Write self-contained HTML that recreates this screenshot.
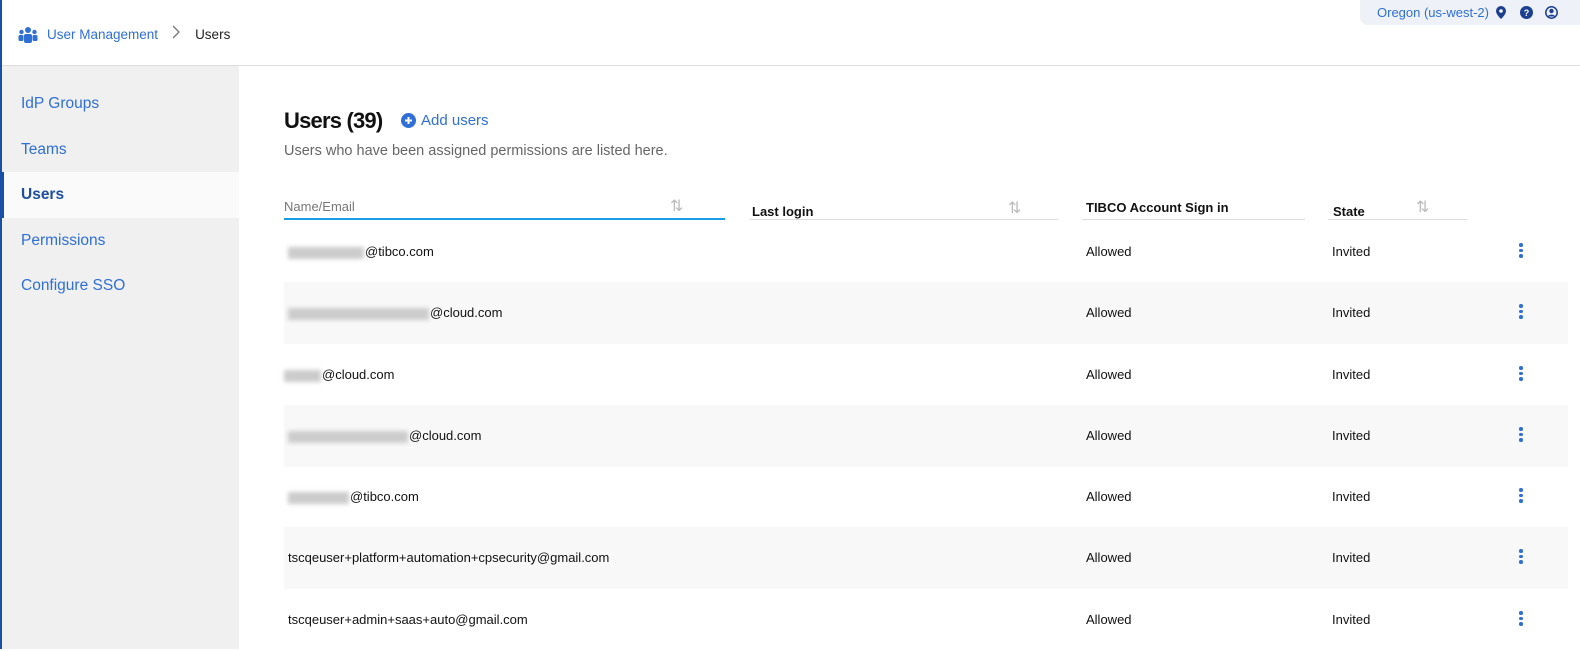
<!DOCTYPE html>
<html><head><style>
*{box-sizing:border-box;margin:0;padding:0}
body{width:1580px;height:649px;overflow:hidden;background:#fff;font-family:"Liberation Sans",sans-serif;position:relative}
.lb{position:absolute;left:0;top:0;width:2px;height:649px;background:#1a4fa8;z-index:5}
.hdr{position:absolute;left:0;top:0;width:1580px;height:66px;border-bottom:1px solid #ddd;background:#fff}
.bc{position:absolute;left:18px;top:25px;font-size:13.5px;display:flex;align-items:center}
.bc .a{color:#2f6fd6;margin-left:9px}
.bc .s{color:#777;margin:0 14px;font-size:16px}
.reg{position:absolute;left:1360px;top:0;width:220px;height:25px;background:#eef2f8;border-radius:0 0 0 8px;font-size:13px;color:#2f6fd6;padding:5px 0 0 17px}
.side{position:absolute;left:0;top:66px;width:239px;height:583px;background:#f0f0f0}
.side div{height:45.5px;line-height:45.5px;padding-left:21px;font-size:15.5px;color:#2f6fd6}
.side .act{background:#fafafa;color:#1d4f9e;font-weight:bold;border-left:4px solid #1a4fa8;padding-left:17px}
h1{position:absolute;left:284px;top:108px;font-size:22px;color:#111;font-weight:bold;letter-spacing:-0.8px}
.add{position:absolute;left:401px;top:112px;font-size:15px;color:#2f6fd6;display:flex;align-items:center}
.sub{position:absolute;left:284px;top:143px;font-size:14.5px;color:#666}
.th{position:absolute;font-size:13px;color:#111;font-weight:bold}
.ln{position:absolute;height:1px;background:#ddd}
.row{position:absolute;left:284px;width:1284px;height:61.5px;font-size:13px;color:#111}
.row.g{background:#f8f8f8}
.row span{position:absolute;top:23px}
.blur{display:inline-block;height:12px;background:#ccc;filter:blur(2px);vertical-align:middle;margin-right:1px}
.dots{position:absolute;left:1235px;top:22px;width:4px}
.dots i{display:block;width:3.5px;height:3.5px;border-radius:50%;background:#2f6fd6;margin-bottom:2px}
.sort{position:absolute;color:#bbb;font-size:16px}
</style></head><body>
<div class="lb"></div>
<div class="hdr">
<div class="bc"><svg width="20" height="16" viewBox="0 0 20 16"><circle cx="10" cy="3" r="3" fill="#2f6fd6"/><circle cx="3.5" cy="5" r="2.2" fill="#2f6fd6"/><circle cx="16.5" cy="5" r="2.2" fill="#2f6fd6"/><rect x="6" y="7" width="8" height="9" rx="2" fill="#2f6fd6"/><rect x="0.5" y="8" width="5" height="6" rx="1.5" fill="#2f6fd6"/><rect x="14.5" y="8" width="5" height="6" rx="1.5" fill="#2f6fd6"/></svg><span class="a">User Management</span><span class="s"><svg width="9" height="14" viewBox="0 0 9 14"><path d="M1 1l6 6-6 6" fill="none" stroke="#777" stroke-width="1.3"/></svg></span><span style="color:#222">Users</span></div>
<div class="reg">Oregon (us-west-2)
<svg style="position:absolute;left:136px;top:6px" width="10" height="13" viewBox="0 0 10 13"><path d="M5 0a5 5 0 0 0-5 5c0 3.5 5 8 5 8s5-4.5 5-8a5 5 0 0 0-5-5z" fill="#1d3f8f"/><circle cx="5" cy="5" r="1.8" fill="#fff"/></svg>
<svg style="position:absolute;left:160px;top:6px" width="13" height="13"><circle cx="6.5" cy="6.5" r="6.5" fill="#1d3f8f"/><text x="6.5" y="10" font-size="9" fill="#fff" text-anchor="middle" font-weight="bold" font-family="Liberation Sans">?</text></svg>
<svg style="position:absolute;left:185px;top:6px" width="13" height="13"><circle cx="6.5" cy="6.5" r="5.7" fill="none" stroke="#1d3f8f" stroke-width="1.5"/><circle cx="6.5" cy="5" r="2.2" fill="#1d3f8f"/><path d="M2.5 10.5a4.5 3.5 0 0 1 8 0z" fill="#1d3f8f"/></svg>
</div>
</div>
<div class="side">
<div style="margin-top:15px">IdP Groups</div><div>Teams</div><div class="act">Users</div><div>Permissions</div><div>Configure SSO</div>
</div>
<h1>Users (39)</h1>
<div class="add"><svg width="15" height="15" style="margin-right:5px"><circle cx="7.5" cy="7.5" r="7.5" fill="#2f6fd6"/><path d="M7.5 4v7M4 7.5h7" stroke="#fff" stroke-width="2"/></svg>Add users</div>
<div class="sub">Users who have been assigned permissions are listed here.</div>

<div class="th" style="left:284px;top:199px;font-weight:normal;color:#777">Name/Email</div>
<div class="sort" style="left:670px;top:196px">⇅</div>
<div style="position:absolute;left:284px;top:218px;width:441px;height:2px;background:#1a9be8"></div>
<div class="th" style="left:752px;top:204px">Last login</div>
<div class="sort" style="left:1008px;top:198px">⇅</div>
<div class="ln" style="left:750px;top:219px;width:308px"></div>
<div class="th" style="left:1086px;top:200px">TIBCO Account Sign in</div>
<div class="ln" style="left:1082px;top:219px;width:223px"></div>
<div class="th" style="left:1333px;top:204px">State</div>
<div class="sort" style="left:1416px;top:197px">⇅</div>
<div class="ln" style="left:1328px;top:219px;width:139px"></div>

<div class="row" style="top:221px"><span style="left:4px"><i class="blur" style="width:76px"></i>@tibco.com</span><span style="left:802px">Allowed</span><span style="left:1048px">Invited</span><div class="dots"><i></i><i></i><i></i></div></div>
<div class="row g" style="top:282px"><span style="left:4px"><i class="blur" style="width:141px"></i>@cloud.com</span><span style="left:802px">Allowed</span><span style="left:1048px">Invited</span><div class="dots"><i></i><i></i><i></i></div></div>
<div class="row" style="top:344px"><span style="left:0px"><i class="blur" style="width:37px"></i>@cloud.com</span><span style="left:802px">Allowed</span><span style="left:1048px">Invited</span><div class="dots"><i></i><i></i><i></i></div></div>
<div class="row g" style="top:405px"><span style="left:4px"><i class="blur" style="width:120px"></i>@cloud.com</span><span style="left:802px">Allowed</span><span style="left:1048px">Invited</span><div class="dots"><i></i><i></i><i></i></div></div>
<div class="row" style="top:466px"><span style="left:4px"><i class="blur" style="width:61px"></i>@tibco.com</span><span style="left:802px">Allowed</span><span style="left:1048px">Invited</span><div class="dots"><i></i><i></i><i></i></div></div>
<div class="row g" style="top:527px"><span style="left:4px">tscqeuser+platform+automation+cpsecurity@gmail.com</span><span style="left:802px">Allowed</span><span style="left:1048px">Invited</span><div class="dots"><i></i><i></i><i></i></div></div>
<div class="row" style="top:589px"><span style="left:4px">tscqeuser+admin+saas+auto@gmail.com</span><span style="left:802px">Allowed</span><span style="left:1048px">Invited</span><div class="dots"><i></i><i></i><i></i></div></div>
</body></html>
